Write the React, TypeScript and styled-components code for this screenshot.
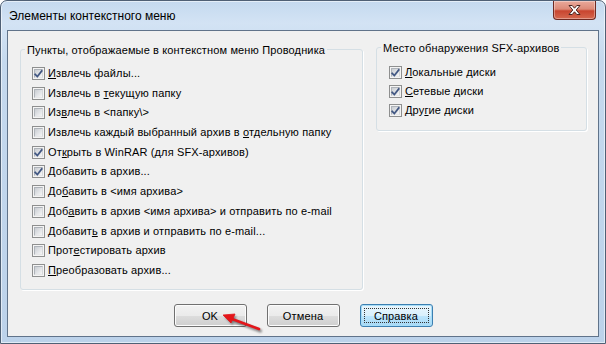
import React from "react";
import styled, { createGlobalStyle } from "styled-components";

const GlobalStyle = createGlobalStyle`
  html, body { margin: 0; padding: 0; background: #ffffff; }
  body { font-family: "Liberation Sans", Arial, sans-serif; }
`;

const Window = styled.div`
  position: relative;
  box-sizing: border-box;
  width: 606px;
  height: 344px;
  border: 1px solid #4f6075;
  border-radius: 7px 7px 0 0;
  background: linear-gradient(to bottom, #c4d9ef 0px, #d3e3f4 22px, #c5d9ee 60px, #bcd2ea 100%);
  box-shadow: inset 0 0 0 1px rgba(255, 255, 255, 0.55);
  display: flex;
  flex-direction: column;
  padding: 0 6px 6px 6px;
`;

const TitleBar = styled.div`
  height: 29px;
  display: flex;
  justify-content: space-between;
  align-items: flex-start;
`;

const TitleText = styled.div`
  font-family: "Liberation Sans", Arial, sans-serif;
  font-size: 12px;
  color: #000;
  padding: 8px 0 0 2px;
  line-height: 14px;
`;

const CloseButton = styled.div`
  width: 43px;
  height: 19px;
  margin-right: 3px;
  box-sizing: border-box;
  border: 1px solid #6f2a22;
  border-top: none;
  border-radius: 0 0 4px 4px;
  background: linear-gradient(to bottom, #e9a99b 0%, #dc8a78 45%, #c8452f 55%, #d5684f 100%);
  box-shadow: inset 0 0 0 1px rgba(255, 255, 255, 0.35);
  display: flex;
  align-items: center;
  justify-content: center;
`;

const Client = styled.div`
  flex: 1;
  box-sizing: border-box;
  border: 1px solid #60738a;
  background: #f0f0f0;
  display: flex;
  flex-direction: column;
  padding: 18px 0 0 12px;
  letter-spacing: 0.14px;
`;

const GroupsRow = styled.div`
  display: flex;
  align-items: flex-start;
  gap: 13px;
`;

const GroupBox = styled.div<{ $w: number; $h: number; $offset?: number }>`
  position: relative;
  box-sizing: border-box;
  width: ${(p) => p.$w}px;
  height: ${(p) => p.$h}px;
  margin-top: ${(p) => p.$offset ?? 0}px;
  border: 1px solid #d5dfe5;
  border-radius: 3px;
  box-shadow: 1px 1px 0 #ffffff;
`;

const GroupTitle = styled.span`
  position: absolute;
  top: -7px;
  left: 4px;
  padding: 0 2px;
  background: #f0f0f0;
  font-size: 11px;
  line-height: 14px;
  color: #000;
  white-space: nowrap;
`;

const List = styled.div<{ $top: number; $left: number; $row: number }>`
  display: flex;
  flex-direction: column;
  padding: ${(p) => p.$top}px 0 0 ${(p) => p.$left}px;
  & > div { height: ${(p) => p.$row}px; }
`;

const Row = styled.div`
  display: flex;
  align-items: flex-start;
  gap: 3px;
  font-size: 11px;
  line-height: 13px;
  color: #000;
  white-space: nowrap;
`;

const Box = styled.span`
  box-sizing: border-box;
  width: 13px;
  height: 13px;
  flex: none;
  border: 1px solid #8e8f8f;
  background: #f4f4f4;
  padding: 1px;
  display: flex;
`;

const BoxInner = styled.span`
  position: relative;
  flex: 1;
  background: linear-gradient(135deg, #c9cdd2 0%, #e2e4e7 55%, #f6f6f6 100%);
  border: 1px solid #b4b8bd;
  border-color: #aeb3b9 #d6d8db #e6e7e8 #aeb3b9;
  box-sizing: border-box;
`;

const Check = styled.svg`
  position: absolute;
  left: -2px;
  top: -2px;
  width: 11px;
  height: 11px;
`;

const Label = styled.span`
  padding-top: 0px;
`;

const Key = styled.span`
  text-decoration: underline;
  text-underline-offset: 1px;
`;

const ButtonRow = styled.div`
  display: flex;
  justify-content: center;
  gap: 20px;
  margin: 14px 12px 0 0;
`;

const Button = styled.div<{ $default?: boolean }>`
  position: relative;
  box-sizing: border-box;
  width: 73px;
  height: 23px;
  border: 1px solid ${(p) => (p.$default ? "#3c7fb1" : "#707070")};
  border-radius: 3px;
  background: ${(p) =>
    p.$default
      ? "linear-gradient(to bottom, #eaf6fd 0%, #d9f0fc 50%, #bee6fd 51%, #a7d9f5 100%)"
      : "linear-gradient(to bottom, #f2f2f2 0%, #ebebeb 50%, #dddddd 51%, #cfcfcf 100%)"};
  box-shadow: inset 0 0 0 1px ${(p) => (p.$default ? "#a8ddf7" : "#fcfcfc")};
  display: flex;
  align-items: center;
  justify-content: center;
  font-size: 11px;
  color: #000;
  ${(p) =>
    p.$default
      ? `&::after { content: ""; position: absolute; inset: 3px; border: 1px dotted #333; }`
      : ""}
`;

const Arrow = styled.svg`
  position: absolute;
  left: 212px;
  top: 306px;
  width: 56px;
  height: 30px;
  pointer-events: none;
`;

type Item = { pre: string; u: string; post: string; checked?: boolean };

const leftItems: Item[] = [
  { pre: "", u: "И", post: "звлечь файлы...", checked: true },
  { pre: "Извлечь в ", u: "т", post: "екущую папку" },
  { pre: "Из", u: "в", post: "лечь в <папку\\>" },
  { pre: "Извлечь каждый выбранный архив в ", u: "о", post: "тдельную папку" },
  { pre: "От", u: "к", post: "рыть в WinRAR (для SFX-архивов)", checked: true },
  { pre: "", u: "Д", post: "обавить в архив...", checked: true },
  { pre: "До", u: "б", post: "авить в <имя архива>" },
  { pre: "Доб", u: "а", post: "вить в архив <имя архива> и отправить по e-mail" },
  { pre: "Добавит", u: "ь", post: " в архив и отправить по e-mail..." },
  { pre: "Прот", u: "е", post: "стировать архив" },
  { pre: "", u: "П", post: "реобразовать архив..." },
];

const rightItems: Item[] = [
  { pre: "", u: "Л", post: "окальные диски", checked: true },
  { pre: "", u: "С", post: "етевые диски", checked: true },
  { pre: "Дру", u: "г", post: "ие диски", checked: true },
];

const CheckBox: React.FC<{ checked?: boolean }> = ({ checked }) => (
  <Box>
    <BoxInner>
      {checked && (
        <Check viewBox="0 0 11 11">
          <path
            d="M2.2 5.4 L4.3 7.6 L8.8 1.8 L9.6 2.9 L4.4 9.6 L1.3 6.6 Z"
            fill="#3d5585"
            stroke="#2b3f6b"
            strokeWidth="0.4"
            strokeLinejoin="round"
          />
        </Check>
      )}
    </BoxInner>
  </Box>
);

const CheckRow: React.FC<{ item: Item }> = ({ item }) => (
  <Row>
    <CheckBox checked={item.checked} />
    <Label>
      {item.pre}
      <Key>{item.u}</Key>
      {item.post}
    </Label>
  </Row>
);

export default function App() {
  return (
    <>
      <GlobalStyle />
      <Window>
        <TitleBar>
          <TitleText>Элементы контекстного меню</TitleText>
          <CloseButton>
            <svg width="15" height="12" viewBox="0 0 15 12">
              <path
                d="M2 1.5 L5.2 1.5 L7.5 4.2 L9.8 1.5 L13 1.5 L9.2 6 L13 10.5 L9.8 10.5 L7.5 7.8 L5.2 10.5 L2 10.5 L5.8 6 Z"
                fill="#ffffff"
                stroke="#4a2520"
                strokeWidth="1"
                strokeLinejoin="round"
              />
            </svg>
          </CloseButton>
        </TitleBar>
        <Client>
          <GroupsRow>
            <GroupBox $w={343} $h={241}>
              <GroupTitle>Пункты, отображаемые в контекстном меню Проводника</GroupTitle>
              <List $top={17} $left={11} $row={19.7}>
                {leftItems.map((it, i) => (
                  <CheckRow key={i} item={it} />
                ))}
              </List>
            </GroupBox>
            <GroupBox $w={211} $h={84} $offset={-2}>
              <GroupTitle>Место обнаружения SFX-архивов</GroupTitle>
              <List $top={18} $left={12} $row={19}>
                {rightItems.map((it, i) => (
                  <CheckRow key={i} item={it} />
                ))}
              </List>
            </GroupBox>
          </GroupsRow>
          <ButtonRow>
            <Button>OK</Button>
            <Button>Отмена</Button>
            <Button $default>Справка</Button>
          </ButtonRow>
        </Client>
        <Arrow viewBox="0 0 56 30">
          <defs>
            <filter id="sh" x="-30%" y="-30%" width="160%" height="160%">
              <feGaussianBlur stdDeviation="1.2" />
            </filter>
          </defs>
          <g opacity="0.45" filter="url(#sh)" transform="translate(1.5,2)">
            <path d="M46 22 L20 12" stroke="#000" strokeWidth="3" strokeLinecap="round" />
            <path d="M10 8 L22 7 L18 16 Z" fill="#000" />
          </g>
          <path d="M46 22 L19 12" stroke="#e3161b" strokeWidth="2.6" strokeLinecap="round" />
          <path d="M10 8 L22 7 L18 16 Z" fill="#e3161b" stroke="#e3161b" strokeWidth="0.8" strokeLinejoin="round" />
        </Arrow>
      </Window>
    </>
  );
}
